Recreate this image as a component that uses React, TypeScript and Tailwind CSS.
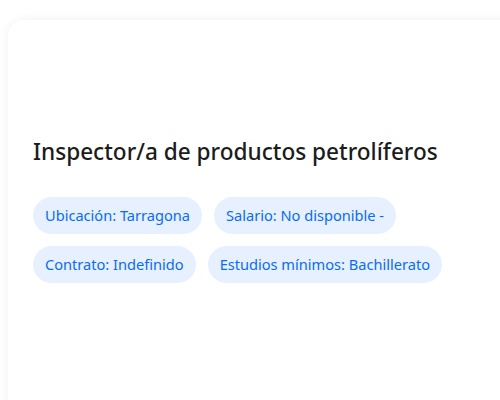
const tags = [
  "Ubicación: Tarragona",
  "Salario: No disponible -",
  "Contrato: Indefinido",
  "Estudios mínimos: Bachillerato",
];

export default function App() {
  return (
    <div
      className="h-[400px] w-[500px] overflow-hidden bg-white pl-2 pt-5"
      style={{ fontFamily: '"Noto Sans", "Open Sans", sans-serif' }}
    >
      <div className="h-[420px] w-[520px] rounded-2xl bg-white pl-[25px] pr-16 pt-[116px] shadow-[0_0_12px_rgba(0,0,0,0.06)]">
        <h1 className="text-[22.6px] font-medium leading-[31px] text-[#1c1c1c]">
          Inspector/a de productos petrolíferos
        </h1>
        <div className="mt-[30px] flex w-[420px] flex-wrap gap-3">
          {tags.map((t) => (
            <span
              key={t}
              className="flex h-[37px] items-center rounded-full bg-[#e6f0ff] px-3 text-[14.6px] text-[#0a6cf2]"
            >
              {t}
            </span>
          ))}
        </div>
      </div>
    </div>
  );
}
